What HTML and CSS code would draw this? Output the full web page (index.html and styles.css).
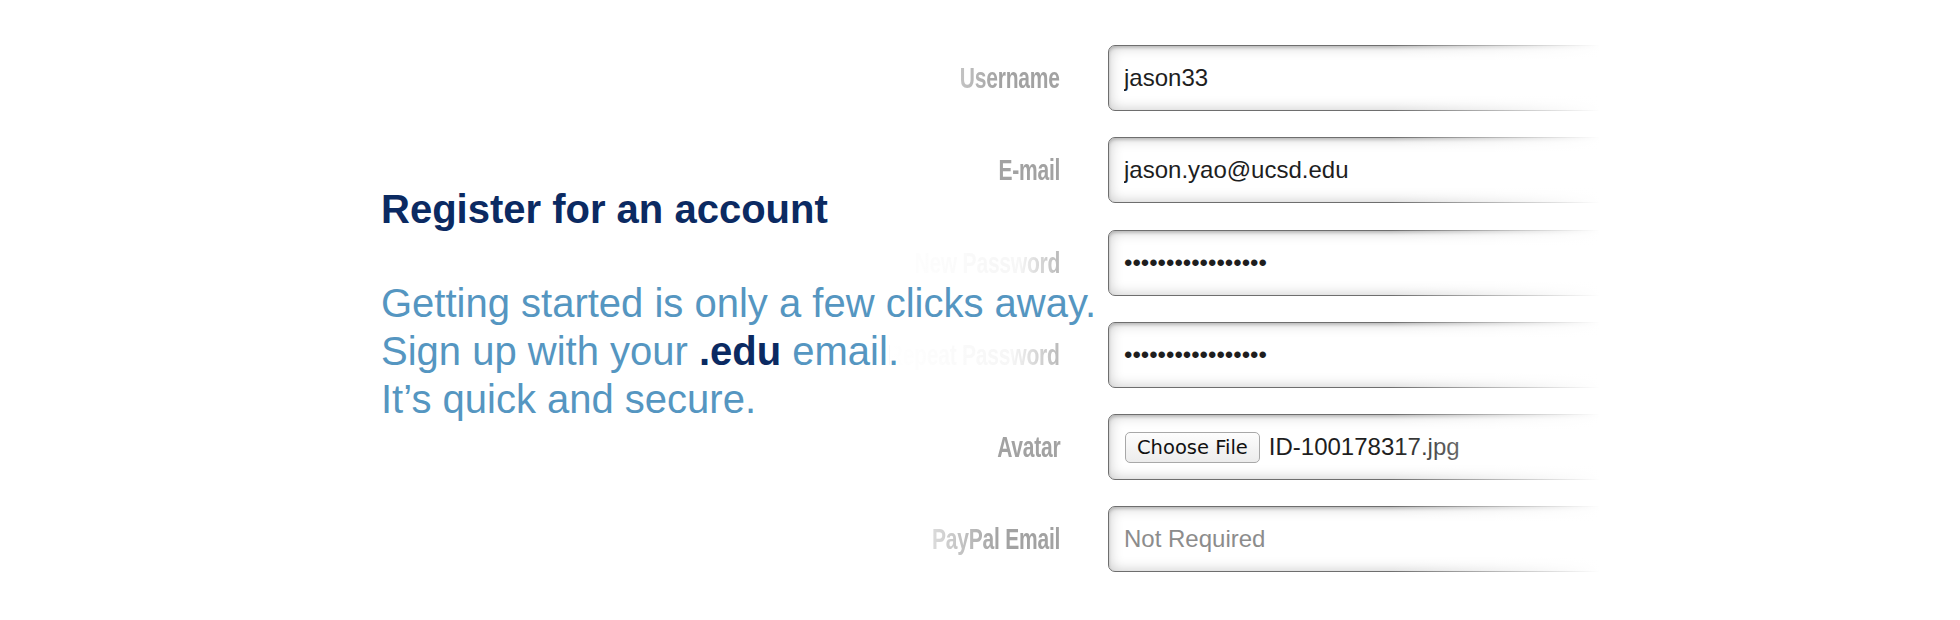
FILE: index.html
```
<!DOCTYPE html>
<html lang="en">
<head>
	<meta charset="UTF-8">
	<title>Register</title>
	<link rel="stylesheet" href="styles.css">
</head>
<body>
	<main class="hero">
		<form class="signup">
			<label class="lbl" for="username"><span>Username</span></label>
			<input class="field" id="username" type="text" value="jason33">

			<label class="lbl" for="email"><span>E-mail</span></label>
			<input class="field" id="email" type="text" value="jason.yao@ucsd.edu">

			<label class="lbl hidden" for="pass1"><span>New Password</span></label>
			<input class="field" id="pass1" type="password" value="abcdefghijklmnopq">

			<label class="lbl hidden" for="pass2"><span>Repeat Password</span></label>
			<input class="field" id="pass2" type="password" value="abcdefghijklmnopq">

			<label class="lbl"><span>Avatar</span></label>
			<div class="field file">
				<button class="choose" type="button">Choose File</button>
				<span class="fname">ID-100178317.jpg</span>
			</div>

			<label class="lbl" for="paypal"><span>PayPal Email</span></label>
			<input class="field" id="paypal" type="text" placeholder="Not Required">
		</form>

		<section class="pitch">
			<h1>Register for an account</h1>
			<p>Getting started is only a few clicks away.<br>
			Sign up with your <b>.edu</b> email.<br>
			It’s quick and secure.</p>
		</section>
	</main>
</body>
</html>
```

FILE: styles.css
```
*{margin: 0;padding: 0;box-sizing: border-box;}
body { background: #fff; font-family: "Liberation Sans", Arial, sans-serif; }
.hero { width: 1960px; height: 620px; display: grid; grid-template-columns: 381px 519px 1fr; position: relative; overflow: hidden; }
.hero::after { content: ""; position: absolute; top: 0; bottom: 0; left: 1390px; right: 0; z-index: 5; background: linear-gradient(to right, rgba(255,255,255,0) 0, #fff 210px, #fff 100%); }

.signup { grid-column: 3; grid-row: 1; position: relative; padding-top: 45px; display: grid; grid-template-columns: 160px 560px; grid-auto-rows: 66px; column-gap: 48px; row-gap: 26.3px; align-content: start; }
.signup::before { content: ""; position: absolute; left: -10px; top: 0; width: 110px; height: 100%; z-index: 1; background: linear-gradient(to right, #fff 0, rgba(255,255,255,0) 100%); }

.lbl { display: flex; justify-content: flex-end; align-items: center; }
.lbl span { display: inline-block; white-space: nowrap; font-size: 30px; line-height: 1; font-weight: bold; color: #a2a2a2; letter-spacing: -0.3px; transform: scaleX(.7); transform-origin: right center; }
.lbl.hidden span { -webkit-mask-image: linear-gradient(to right, rgba(0,0,0,.07) 0, rgba(0,0,0,.09) 72%, rgba(0,0,0,.75) 100%); mask-image: linear-gradient(to right, rgba(0,0,0,.07) 0, rgba(0,0,0,.09) 72%, rgba(0,0,0,.75) 100%); }

.field { position: relative; z-index: 2; width: 100%; height: 66px; border: 1px solid #6e6e6e; border-radius: 7px; background: #fff; box-shadow: inset 0 2px 3px rgba(0,0,0,.18), inset 0 0 14px rgba(0,0,0,.22); padding: 0 15px; font-family: "Liberation Sans", Arial, sans-serif; font-size: 24px; color: #1e1e1e; outline: none; }
.field::placeholder { color: #8c8c8c; }
.field[type=password] { font-size: 24px; letter-spacing: 0; }

.file { display: flex; align-items: center; gap: 9px; padding-left: 16px; }
.choose { height: 31px; padding: 0 11px; border: 1px solid #a8a8a8; border-radius: 5px; background: linear-gradient(#fdfdfd, #ececec); font-family: "DejaVu Sans", sans-serif; font-size: 19.5px; color: #111; }
.fname { font-size: 24px; color: #1e1e1e; white-space: nowrap; }

.pitch { grid-column: 2 / 4; grid-row: 1; position: relative; z-index: 3; padding-top: 185px; pointer-events: none; }
.pitch h1 { font-size: 40px; line-height: 48px; font-weight: bold; color: #0b2a62; }
.pitch p { margin-top: 46px; font-size: 40px; line-height: 48px; color: #5596c1; white-space: nowrap; }
.pitch b { color: #0b2a62; }
```
